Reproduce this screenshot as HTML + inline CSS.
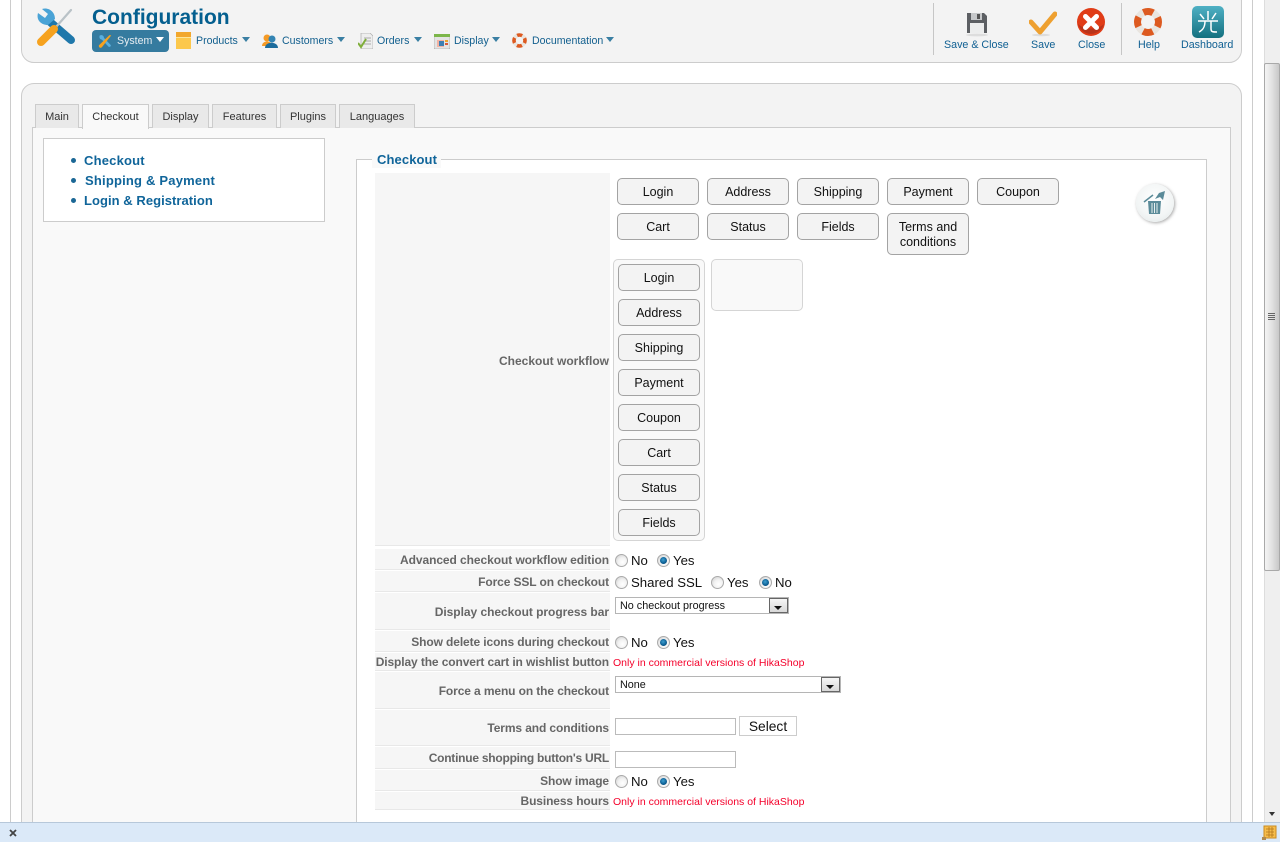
<!DOCTYPE html>
<html lang="en"><head><meta charset="utf-8"><title>Configuration</title>
<style>
html,body{margin:0;padding:0;width:1280px;height:842px;overflow:hidden;background:#fff;font-family:"Liberation Sans",Arial,sans-serif}
div,span,svg,a{position:absolute;box-sizing:border-box}
#w{left:0;top:0;width:1280px;height:842px;overflow:hidden}
.t{white-space:nowrap}
.tab{top:104px;height:24px;background:#e9e9e9;border:1px solid #ccc;border-bottom:none;font-size:11px;line-height:24px;text-align:center;color:#333}
.m{top:34px;font-size:10.6px;line-height:14px;color:#125f8e;white-space:nowrap}
.ar{width:0;height:0;border-left:4.5px solid transparent;border-right:4.5px solid transparent;border-top:5px solid #3a7fa3;top:37px}
.tb{top:39px;font-size:10.7px;line-height:13px;color:#0f5f92;white-space:nowrap;text-align:center}
.btn{width:82px;height:27px;background:#f3f3f3;border:1px solid #a3a3a3;border-radius:5px;font-size:12.5px;line-height:26px;text-align:center;color:#111}
.l{left:375px;width:235px;background:#f6f6f6;border-bottom:1px solid #e8e8e8;text-align:right;font-weight:bold;font-size:12px;letter-spacing:-.11px;color:#666;padding-right:1px;white-space:nowrap}
.r{width:13px;height:13px;border-radius:50%;border:1px solid #aaa;background:radial-gradient(circle at 60% 65%,#fff 0,#f2f2f2 45%,#c8c8c8 100%)}
.r.on:after{content:"";position:absolute;left:2px;top:2px;width:7px;height:7px;border-radius:50%;background:radial-gradient(circle at 45% 40%,#3e9fd0 0,#0b5d92 60%,#07385c 100%)}
.v{font-size:13.2px;line-height:16px;color:#111;white-space:nowrap}
.red{left:613px;font-size:10.5px;line-height:12px;color:#f4002a;white-space:nowrap}
.sel{background:#fff;border:1px solid #b5b5b5;font-size:10.8px;color:#111;padding-left:4px;line-height:16px}
.sel b{position:absolute;right:0;top:0;width:17px;bottom:0;background:linear-gradient(#f5f5f5,#d8d8d8);border:1px solid #666}
.sel b:after{content:"";position:absolute;left:4px;top:7px;border-left:4px solid transparent;border-right:4px solid transparent;border-top:4px solid #111}
.inp{background:#fff;border:1px solid #bbb;height:17px}
.s{font-size:13px;line-height:16px;font-weight:bold;color:#10659a;letter-spacing:.2px}
</style></head><body>
<div id="w">
<!-- page frame -->
<div style="left:10px;top:0;width:1px;height:822px;background:#ccc"></div>
<div style="left:1252px;top:0;width:1px;height:822px;background:#ccc"></div>

<!-- header -->
<div style="left:21px;top:-12px;width:1221px;height:75px;background:#f3f3f3;border:1px solid #ccc;border-radius:13px"></div>
<svg style="left:33px;top:5px" width="46" height="44" viewBox="0 0 46 44">
<path d="M16 16L38 35" stroke="#1f78ab" stroke-width="8" stroke-linecap="round"/>
<path d="M5 8 C3 15 8 20 15 20 L22 14 C22 7 16 2 9 4 L15 9 L12 13 Z" fill="#4aa3d6"/>
<path d="M23 22L38 5" stroke="#b9c2c7" stroke-width="2.200" stroke-linecap="round"/>
<path d="M21 24L8 37" stroke="#f6a21e" stroke-width="8" stroke-linecap="round"/>
</svg>
<div class="t" style="left:92px;top:5px;font-size:21px;line-height:26px;font-weight:bold;color:#045f8f">Configuration</div>

<div style="left:92px;top:30px;width:77px;height:22px;background:#357b9f;border-radius:4px"></div>
<svg style="left:97px;top:33px" width="16" height="16" viewBox="0 0 46 44"><path d="M8 6 C5 13 9 18 14 18 L33 38 C36 41 42 36 39 33 L20 13 C20 7 15 3 8 6Z" fill="#5ab0df"/><path d="M36 5 L41 6 L14 40 C10 44 3 40 6 34Z" fill="#f6a21e"/></svg>
<div class="m" style="left:117px;color:#e8eef2">System</div>
<div class="ar" style="left:156px;border-top-color:#fff"></div>

<svg style="left:176px;top:32px" width="15" height="17" viewBox="0 0 15 17"><rect x="0" y="0" width="15" height="5" fill="#f2a72d"/><rect x="0" y="5" width="15" height="12" fill="#fcc84c"/><rect x="0" y="5" width="15" height="1" fill="#fde69b"/></svg>
<div class="m" style="left:196px">Products</div><div class="ar" style="left:242px"></div>

<svg style="left:262px;top:33px" width="16" height="15" viewBox="0 0 16 15"><circle cx="5" cy="5" r="3.500" fill="#f59a25"/><path d="M0 13 C0 7 10 7 10 13Z" fill="#f59a25"/><circle cx="10" cy="6" r="3.500" fill="#3384b3"/><path d="M3 15 C3 8 16 8 16 15Z" fill="#1c6c9c"/></svg>
<div class="m" style="left:282px">Customers</div><div class="ar" style="left:337px"></div>

<svg style="left:358px;top:33px" width="15" height="16" viewBox="0 0 15 16"><path d="M3 0H12L15 3V16H3Z" fill="#eee" stroke="#aaa" stroke-width=".7"/><path d="M6 5H13M6 8H13M6 11H13" stroke="#aaa"/><path d="M0 10L3 14L8 6" fill="none" stroke="#7fae3a" stroke-width="2"/></svg>
<div class="m" style="left:377px">Orders</div><div class="ar" style="left:414px"></div>

<svg style="left:434px;top:34px" width="16" height="15" viewBox="0 0 16 15"><rect width="16" height="15" rx="1" fill="#e3e3e3" stroke="#9a9a9a" stroke-width=".6"/><rect width="16" height="3" fill="#7cb64a"/><rect x="3" y="6" width="7" height="7" fill="#f3b3a3"/><rect x="5" y="7" width="5" height="5" fill="#3d7fb3"/><rect x="11" y="6" width="3" height="2" fill="#eea42a"/><rect x="11" y="9" width="3" height="2" fill="#d9593a"/></svg>
<div class="m" style="left:454px">Display</div><div class="ar" style="left:492px"></div>

<svg style="left:512px;top:33px" width="15" height="15" viewBox="0 0 15 15"><circle cx="7.5" cy="7.5" r="5.5" fill="none" stroke="#e8e4de" stroke-width="3.6"/><circle cx="7.5" cy="7.5" r="5.5" fill="none" stroke="#dd5a20" stroke-width="3.6" stroke-dasharray="5.2 3.44" stroke-dashoffset="2.6"/></svg>
<div class="m" style="left:532px">Documentation</div><div class="ar" style="left:606px"></div>

<!-- toolbar -->
<div style="left:933px;top:3px;width:1px;height:52px;background:#c6c6c6"></div>
<div style="left:1121px;top:3px;width:1px;height:52px;background:#c6c6c6"></div>
<svg style="left:965px;top:11px" width="24" height="26" viewBox="0 0 24 26"><ellipse cx="12" cy="24" rx="11" ry="1.4" fill="#ddd"/><path d="M2 2H19L22 5V22H2Z" fill="#5c5f63"/><rect x="6" y="2" width="11" height="7" fill="#c6c8ca"/><rect x="12" y="3" width="3" height="5" fill="#555"/><rect x="5" y="12" width="14" height="10" fill="#eceded"/></svg>
<svg style="left:1029px;top:11px" width="28" height="26" viewBox="0 0 28 26"><ellipse cx="12" cy="24" rx="9" ry="1.3" fill="#ddd"/><path d="M2 11 L11 21 L26 3" fill="none" stroke="#eea030" stroke-width="5" stroke-linecap="round" stroke-linejoin="round"/></svg>
<svg style="left:1076px;top:7px" width="30" height="30" viewBox="0 0 30 30"><circle cx="15" cy="15" r="14" fill="#e03c17"/><path d="M2 17 A13.500 13.500 0 0 0 28 17 C22 23 8 23 2 17Z" fill="#b9341a"/><path d="M9.500 9.500L20.500 20.500M20.500 9.500L9.500 20.500" stroke="#fff" stroke-width="5" stroke-linecap="round"/></svg>
<svg style="left:1134px;top:8px" width="28" height="28" viewBox="0 0 28 28"><circle cx="14" cy="14" r="10.500" fill="none" stroke="#e9e5df" stroke-width="7"/><circle cx="14" cy="14" r="10.500" fill="none" stroke="#dd5a20" stroke-width="7" stroke-dasharray="10 6.490" stroke-dashoffset="5"/></svg>
<svg style="left:1192px;top:6px" width="32" height="32" viewBox="0 0 32 32"><defs><linearGradient id="g" x1="0" y1="0" x2="0" y2="1"><stop offset="0" stop-color="#4fb0c4"/><stop offset="1" stop-color="#14707f"/></linearGradient></defs><rect width="32" height="32" rx="5" fill="url(#g)"/><path d="M16 5V14M8 8L12 13M24 7L20 13M6 15H26M13 15C13 21 11 24 7 26M19 15V23C19 26 21 26 25 26" fill="none" stroke="#fff" stroke-width="1.500"/></svg>
<div class="tb" style="left:944px">Save &amp; Close</div>
<div class="tb" style="left:1031px">Save</div>
<div class="tb" style="left:1078px">Close</div>
<div class="tb" style="left:1138px">Help</div>
<div class="tb" style="left:1181px">Dashboard</div>

<!-- main box -->
<div style="left:21px;top:83px;width:1221px;height:800px;background:#f3f3f3;border:1px solid #ccc;border-radius:13px"></div>
<div style="left:32px;top:127px;width:1199px;height:720px;background:#f9f9f9;border:1px solid #ccc"></div>
<div class="tab" style="left:35px;width:44px">Main</div>
<div class="tab" style="left:82px;width:67px;background:#f9f9f9;height:25px;z-index:2">Checkout</div>
<div class="tab" style="left:152px;width:57px">Display</div>
<div class="tab" style="left:212px;width:65px">Features</div>
<div class="tab" style="left:280px;width:56px">Plugins</div>
<div class="tab" style="left:339px;width:76px">Languages</div>

<!-- side menu -->
<div style="left:43px;top:138px;width:282px;height:84px;background:#fff;border:1px solid #ccc"></div>
<div style="left:71px;top:158px;width:5px;height:5px;border-radius:50%;background:#1b6795"></div>
<div style="left:71px;top:178px;width:5px;height:5px;border-radius:50%;background:#1b6795"></div>
<div style="left:71px;top:198px;width:5px;height:5px;border-radius:50%;background:#1b6795"></div>
<div class="t s" style="left:84px;top:153px">Checkout</div>
<div class="t s" style="left:85px;top:173px">Shipping &amp; Payment</div>
<div class="t s" style="left:84px;top:193px;letter-spacing:.05px">Login &amp; Registration</div>

<!-- fieldset -->
<div style="left:356px;top:159px;width:851px;height:720px;background:#fff;border:1px solid #ccc"></div>
<div class="t s" style="left:372px;top:152px;padding:0 4px 0 5px;background:#f9f9f9;letter-spacing:.1px">Checkout</div>

<!-- labels -->
<div class="l" style="top:173px;height:373px;line-height:376px;letter-spacing:0">Checkout workflow</div>
<div class="l" style="top:549px;height:21px;line-height:23px;letter-spacing:-.07px">Advanced checkout workflow edition</div>
<div class="l" style="top:571px;height:21px;line-height:23px">Force SSL on checkout</div>
<div class="l" style="top:593px;height:37px;line-height:38px;letter-spacing:-.04px">Display checkout progress bar</div>
<div class="l" style="top:631px;height:21px;line-height:23px">Show delete icons during checkout</div>
<div class="l" style="top:653px;height:18px;line-height:18px">Display the convert cart in wishlist button</div>
<div class="l" style="top:672px;height:37px;line-height:38px">Force a menu on the checkout</div>
<div class="l" style="top:710px;height:36px;line-height:36px">Terms and conditions</div>
<div class="l" style="top:747px;height:22px;line-height:22px;letter-spacing:-.24px">Continue shopping button's URL</div>
<div class="l" style="top:770px;height:21px;line-height:23px">Show image</div>
<div class="l" style="top:792px;height:18px;line-height:18px">Business hours</div>

<!-- workflow buttons -->
<div class="btn" style="left:617px;top:178px">Login</div>
<div class="btn" style="left:707px;top:178px">Address</div>
<div class="btn" style="left:797px;top:178px">Shipping</div>
<div class="btn" style="left:887px;top:178px">Payment</div>
<div class="btn" style="left:977px;top:178px">Coupon</div>
<div class="btn" style="left:617px;top:213px">Cart</div>
<div class="btn" style="left:707px;top:213px">Status</div>
<div class="btn" style="left:797px;top:213px">Fields</div>
<div class="btn" style="left:887px;top:213px;height:42px;line-height:15px;padding-top:6px">Terms and conditions</div>

<div style="left:613px;top:259px;width:92px;height:282px;background:#f9f9f9;border:1px solid #d5d5d5;border-radius:5px"></div>
<div style="left:711px;top:259px;width:92px;height:52px;background:#f9f9f9;border:1px solid #d5d5d5;border-radius:5px"></div>
<div class="btn" style="left:618px;top:264px">Login</div>
<div class="btn" style="left:618px;top:299px">Address</div>
<div class="btn" style="left:618px;top:334px">Shipping</div>
<div class="btn" style="left:618px;top:369px">Payment</div>
<div class="btn" style="left:618px;top:404px">Coupon</div>
<div class="btn" style="left:618px;top:439px">Cart</div>
<div class="btn" style="left:618px;top:474px">Status</div>
<div class="btn" style="left:618px;top:509px">Fields</div>

<!-- trash -->
<div style="left:1136px;top:184px;width:38px;height:38px;border-radius:50%;background:radial-gradient(circle at 50% 40%,#fff 0,#f2f5f5 60%,#e0e6e6 100%);box-shadow:1px 1px 3px rgba(0,0,0,.35)"></div>
<svg style="left:1142px;top:189px" width="26" height="27" viewBox="0 0 26 27"><path d="M2 13L11 6" stroke="#5b8b99" stroke-width="1.500"/><path d="M13 10L17 4L23 2L21 11L18 8Z" fill="#5b8b99"/><path d="M6 12H19L18 25H7Z" fill="#5b8b99"/><path d="M10 14V24M12.500 14V24M15 14V24" stroke="#e8f0f0" stroke-width="1"/></svg>

<!-- Values -->
<div class="r" style="left:615px;top:554px"></div><div class="v" style="left:631px;top:553px">No</div>
<div class="r on" style="left:657px;top:554px"></div><div class="v" style="left:673px;top:553px">Yes</div>

<div class="r" style="left:615px;top:576px"></div><div class="v" style="left:631px;top:575px">Shared SSL</div>
<div class="r" style="left:711px;top:576px"></div><div class="v" style="left:727px;top:575px">Yes</div>
<div class="r on" style="left:759px;top:576px"></div><div class="v" style="left:775px;top:575px">No</div>

<div class="sel" style="left:615px;top:597px;width:174px;height:17px">No checkout progress<b></b></div>

<div class="r" style="left:615px;top:636px"></div><div class="v" style="left:631px;top:635px">No</div>
<div class="r on" style="left:657px;top:636px"></div><div class="v" style="left:673px;top:635px">Yes</div>

<div class="red" style="top:657px">Only in commercial versions of HikaShop</div>

<div class="sel" style="left:615px;top:676px;width:226px;height:17px">None<b></b></div>

<div class="inp" style="left:615px;top:718px;width:121px"></div>
<div style="left:739px;top:716px;width:58px;height:20px;background:#fff;border:1px solid #ccc;font-size:13.8px;line-height:20px;text-align:center;color:#111">Select</div>

<div class="inp" style="left:615px;top:751px;width:121px"></div>

<div class="r" style="left:615px;top:775px"></div><div class="v" style="left:631px;top:774px">No</div>
<div class="r on" style="left:657px;top:775px"></div><div class="v" style="left:673px;top:774px">Yes</div>

<div class="red" style="top:796px">Only in commercial versions of HikaShop</div>

<!-- scrollbar -->
<div style="left:1264px;top:0;width:16px;height:822px;background:#efefef;border-left:1px solid #ddd"></div>
<div style="left:1264px;top:63px;width:16px;height:508px;background:linear-gradient(90deg,#f4f4f4,#e4e4e4 45%,#c8c8c8);border:1px solid #a9a9a9;border-radius:2px"></div>
<div style="left:1268px;top:313px;width:7px;height:1px;background:#666"></div>
<div style="left:1268px;top:315px;width:7px;height:1px;background:#666"></div>
<div style="left:1268px;top:317px;width:7px;height:1px;background:#666"></div>
<div style="left:1268px;top:319px;width:7px;height:1px;background:#666"></div>
<div style="left:1269px;top:812px;width:0;height:0;border-left:3.500px solid transparent;border-right:3.500px solid transparent;border-top:4px solid #333"></div>

<!-- bottom bar -->
<div style="left:0;top:822px;width:1280px;height:20px;background:#dbe9f8;border-top:1px solid #b7c8da"></div>
<svg style="left:9px;top:829px" width="8" height="8" viewBox="0 0 8 8"><path d="M1 1L7 7M7 1L1 7" stroke="#444" stroke-width="1.800"/></svg>
<svg style="left:1262px;top:825px" width="15" height="16" viewBox="0 0 15 16"><rect x="2" y="1" width="12" height="12" fill="#f6bd4c" stroke="#c98a22"/><rect x="0" y="12" width="4" height="3" fill="#b08a50"/><path d="M4 4H12M4 7H12M4 10H12M7 2V12M10 2V12" stroke="#b3771c" stroke-width=".8"/></svg>
</div>
</body></html>
